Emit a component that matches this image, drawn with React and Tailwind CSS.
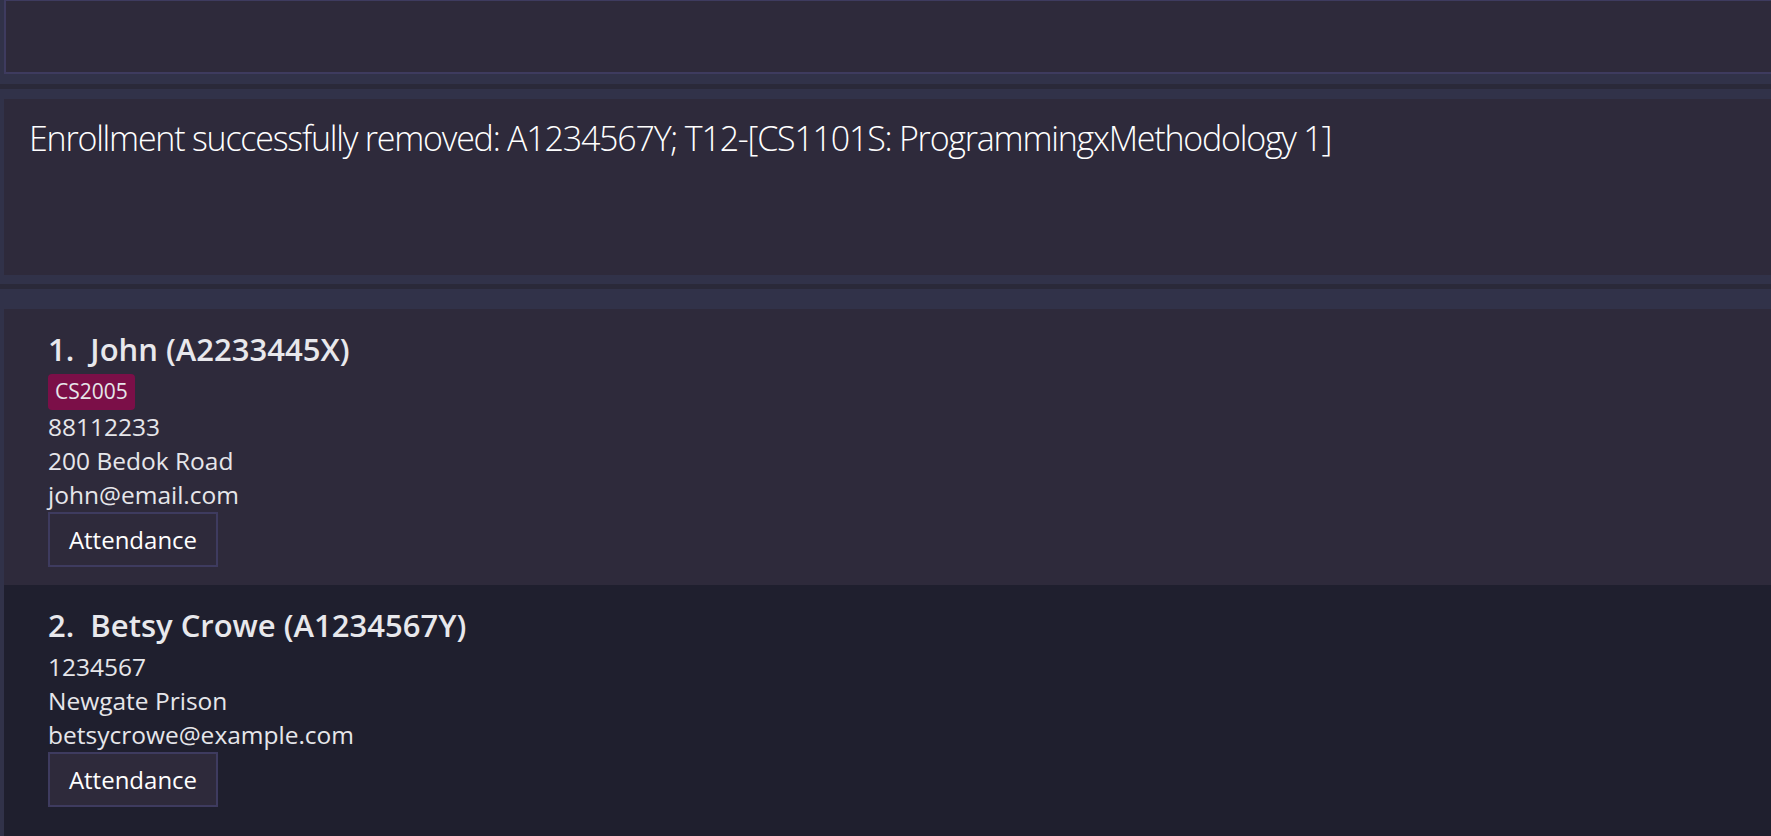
const people = [
  {
    name: 'John (A2233445X)',
    tags: ['CS2005'],
    phone: '88112233',
    address: '200 Bedok Road',
    email: 'john@email.com',
  },
  {
    name: 'Betsy Crowe (A1234567Y)',
    tags: [],
    phone: '1234567',
    address: 'Newgate Prison',
    email: 'betsycrowe@example.com',
  },
]

function PersonCard({ person, index }) {
  const odd = index % 2 === 0
  return (
    <div className={`pl-[44px] pt-[20px] pb-[18px] ${odd ? 'bg-[#2e2a3b]' : 'bg-[#1f1f2e]'}`}>
      <div className="h-[40px] flex items-center text-[31px] font-semibold text-[#e8e8ec] whitespace-pre">
        {index + 1}.  {person.name}
      </div>
      <div className="mt-[5px] flex flex-col items-start text-[24.5px] text-[#e6e6ea]">
        {person.tags.length > 0 && (
          <div className="flex gap-2 h-[36px]">
            {person.tags.map((t) => (
              <span
                key={t}
                className="h-[36px] px-[7px] flex items-center rounded-[4px] bg-[#7b0f48] text-[21px] text-[#e6e6ea]"
              >
                {t}
              </span>
            ))}
          </div>
        )}
        <div className="h-[34px] leading-[34px]">{person.phone}</div>
        <div className="h-[34px] leading-[34px]">{person.address}</div>
        <div className="h-[34px] leading-[34px]">{person.email}</div>
        <button className="h-[55px] w-[170px] border-2 border-[#3e3b5f] bg-[#2e2a3b] text-white text-[24px]">
          Attendance
        </button>
      </div>
    </div>
  )
}

export default function App() {
  return (
    <div
      className="h-[836px] w-full overflow-hidden flex flex-col bg-[#313249]"
      style={{ fontFamily: '"Open Sans", "Noto Sans", sans-serif' }}
    >
      {/* command box */}
      <div className="h-[74px] shrink-0 ml-[4px] border-l-2 border-t border-b-2 border-[#3e3b5f] bg-[#2e2a3b]" />
      <div className="h-[10px] shrink-0" />
      <div className="h-[5px] shrink-0 bg-[#2a2939]" />
      <div className="h-[10px] shrink-0" />

      {/* result display */}
      <div className="h-[176px] shrink-0 ml-[4px] bg-[#2e2a3b] pl-[25px] pt-[14px]">
        <div className="text-[34px] font-light tracking-[-1.22px] text-white leading-[50px] whitespace-nowrap">
          Enrollment successfully removed: A1234567Y; T12-[CS1101S: ProgrammingxMethodology 1]
        </div>
      </div>
      <div className="h-[9px] shrink-0" />
      <div className="h-[5px] shrink-0 bg-[#2a2939]" />
      <div className="h-[20px] shrink-0" />

      {/* person list */}
      <div className="flex-1 ml-[4px] bg-[#1f1f2e] overflow-hidden">
        {people.map((p, i) => (
          <PersonCard key={p.name} person={p} index={i} />
        ))}
      </div>
    </div>
  )
}
